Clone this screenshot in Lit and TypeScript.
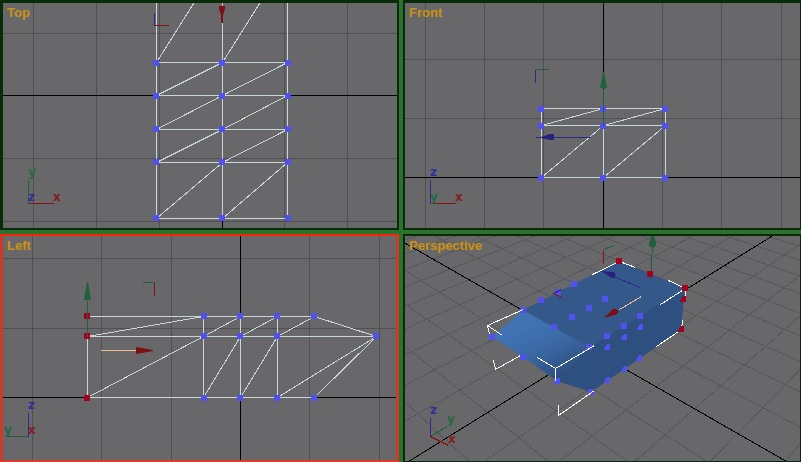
import { LitElement, html, svg, css, nothing, type SVGTemplateResult } from "lit";
import { customElement, property } from "lit/decorators.js";

type Point = [number, number];
type View = "Top" | "Front" | "Left" | "Perspective";

interface Letter {
  text: "x" | "y" | "z";
  at: Point;
}

interface Flat {
  box: string;
  columns: number[];
  rows: number[];
  axisX: number;
  axisY: number;
  mesh: string;
  vertices: Point[];
  selected: Point[];
}

// Shared extent of every line that crosses a whole view.
const FAR = 900;

const product = (xs: number[], ys: number[]): Point[] =>
  ys.flatMap((y) => xs.map((x): Point => [x, y]));

const FLATS: Record<Exclude<View, "Perspective">, Flat> = {
  Top: {
    box: "3 3 394 225",
    columns: [33, 96, 159, 284, 347],
    rows: [33, 158, 221],
    axisX: 222,
    axisY: 95,
    mesh:
      "M156 0V218M222 22V218M287 0V218M156 62H287M156 95H287M156 129H287M156 162H287M156 218H287" +
      "M156 62L195 0M222 62L261 0M156 95L222 62M222 95L287 62M156 129L222 95M222 129L287 95" +
      "M156 162L222 129M222 162L287 129M156 218L222 162M222 218L287 162",
    vertices: product([156, 222, 288], [63, 96, 129, 162, 218]),
    selected: [],
  },
  Front: {
    box: "405 3 395 225",
    columns: [425, 484, 543, 662, 721, 781],
    rows: [59, 118],
    axisX: 603,
    axisY: 177,
    mesh:
      "M541 108H665V177H541ZM541 125H665M603 125V177" +
      "M541 125L603 108M603 125L665 108M541 177L603 125M603 177L665 125",
    vertices: product([541, 603, 665], [109, 126, 178]),
    selected: [],
  },
  Left: {
    box: "3 236 393 224",
    columns: [32, 101, 171, 309, 379],
    rows: [258, 328],
    axisX: 240,
    axisY: 397,
    mesh:
      "M87 316H314L376 336H87V397H314L376 336L277 397M203 316V397M240 316V397M277 316V397" +
      "M87 336L203 316M203 336L240 316M240 336L277 316M277 336L314 316" +
      "M87 397L203 336M203 397L240 336M240 397L277 336",
    vertices: [
      ...product([204, 240, 277, 314], [316, 398]),
      ...product([204, 240, 277, 376], [336]),
    ],
    selected: [[87, 316], [87, 336], [87, 398]],
  },
};

const LETTERS: Record<View, Letter[]> = {
  Top: [{ text: "y", at: [28, 176] }, { text: "z", at: [28, 201] }, { text: "x", at: [53, 201] }],
  Front: [{ text: "z", at: [430, 176] }, { text: "y", at: [430, 201] }, { text: "x", at: [455, 201] }],
  Left: [{ text: "z", at: [28, 409] }, { text: "y", at: [4, 434] }, { text: "x", at: [28, 434] }],
  Perspective: [{ text: "z", at: [430, 414] }, { text: "y", at: [447, 423] }, { text: "x", at: [448, 443] }],
};

// Ground plane projection: origin, the two vanishing points, and the depth change per grid cell.
const ORIGIN: Point = [590, 349];
const VANISH_A: Point = [-41, -12];
const VANISH_B: Point = [1172, -12];
const DEPTH_A = -0.0474;
const DEPTH_B = 0.0499;

function project(a: number, b: number): string {
  const w = 1 + a + b;
  const at = (k: 0 | 1) => ((ORIGIN[k] + a * VANISH_A[k] + b * VANISH_B[k]) / w).toFixed(1);
  return `${at(0)} ${at(1)}`;
}

function groundLine(n: number, alongB: boolean): string {
  const fixed = n * (alongB ? DEPTH_A : DEPTH_B);
  const ends = [0.7, 1.6].map((w) => {
    const free = w - 1 - fixed;
    return alongB ? project(fixed, free) : project(free, fixed);
  });
  return `M${ends[0]}L${ends[1]}`;
}

const STEPS = Array.from({ length: 49 }, (_, i) => i - 24).filter((n) => n !== 0);
const GROUND = STEPS.map((n) => groundLine(n, true) + groundLine(n, false)).join("");
const GROUND_AXES = groundLine(0, true) + groundLine(0, false);

const SOLID_VERTICES: Point[] = [
  [523, 310], [541, 300], [558, 292], [574, 284], [492, 337], [523, 357], [557, 381],
  [591, 392], [589, 347], [554, 327], [572, 317], [589, 308], [605, 299], [607, 336],
  [624, 326], [640, 316],
];
const HALF_VERTICES: Point[] = [[607, 347], [624, 337], [640, 327], [607, 380], [624, 369], [639, 358]];

const square = ([x, y]: Point) => `M${x - 3} ${y - 3}h6v6h-6z`;
const wedge = ([x, y]: Point) => `M${x - 3} ${y + 3}v-1l3 -5h3v6z`;

@customElement("view-port")
export class ViewPort extends LitElement {
  @property() view: View = "Top";

  static styles = css`
    :host {
      display: block;
      position: relative;
      overflow: hidden;
      min-width: 0;
      background: #68686a;
    }
    .name {
      position: absolute;
      top: 2px;
      left: 4px;
      margin: 0;
      color: #cb9210;
      font: bold 13px/16px "Liberation Sans", Arial, sans-serif;
    }
    .scene {
      display: block;
      width: 100%;
      height: 100%;
    }
    .lines path {
      fill: none;
      shape-rendering: crispEdges;
    }
    .lines .grid { stroke: #505052; }
    .lines .ground { stroke: #58585a; }
    .lines .axis { stroke: #000; }
    .lines .mesh { stroke: #cbd6db; }
    .lines .bracket { stroke: #fff; }
    .lines .red { stroke: #8c1014; }
    .lines .green { stroke: #235f3a; }
    .lines .blue { stroke: #30288c; }
    .lines .amber { stroke: #edbd91; }
    .vertex { fill: #5151ef; shape-rendering: crispEdges; }
    .picked { fill: #a50020; shape-rendering: crispEdges; }
    .head-red { fill: #7b1014; }
    .head-green { fill: #20603a; }
    .head-blue { fill: #292180; }
    .letter {
      font: bold 12px "DejaVu Sans", sans-serif;
    }
    .letter-x { fill: #861c20; }
    .letter-y { fill: #236b3d; }
    .letter-z { fill: #342d96; }
    .face-top { fill: #345889; }
    .face-side { fill: #2e5080; }
  `;

  private gizmo(): { lines: SVGTemplateResult; heads: SVGTemplateResult } {
    switch (this.view) {
      case "Top":
        return {
          lines: svg`
            <path class="amber" d="M222 0V6" />
            <path class="blue" d="M154 12V25" />
            <path class="red" d="M154 25H168M28 203H53" />
            <path class="green" d="M28 179V203" />`,
          heads: svg`<path class="head-red" d="M219 6h6v3l-2 6v7h-2v-7l-2 -6z" />`,
        };
      case "Front":
        return {
          lines: svg`
            <path class="green" d="M603 88V125M535 69H548" />
            <path class="blue" d="M535 137H590M535 69V82M430 179V203" />
            <path class="red" d="M430 203H455" />`,
          heads: svg`
            <path class="head-green" d="M603 72h1l3 16h-7z" />
            <path class="head-blue" d="M541 137l9 -3h4v6h-4l-9 -2z" />`,
        };
      case "Left":
        return {
          lines: svg`
            <path class="green" d="M87 300V336M142 282H154M6 436H28" />
            <path class="red" d="M154 282V295" />
            <path class="blue" d="M28 412V436" />
            <path class="amber" d="M100 350H136" />`,
          heads: svg`
            <path class="head-green" d="M87 282h1l3 18h-7z" />
            <path class="head-red" d="M136 347l17 3v1l-17 3z" />`,
        };
      default:
        return {
          lines: svg`
            <path class="green" d="M652 245L650 279M603 249L614 245M430 436L447 426" />
            <path class="blue" d="M640 287L613 276M430 417V436M553 293L561 289" />
            <path class="amber" d="M641 296L619 309" />
            <path class="red" d="M603 250V263M553 293L562 297M430 436L448 445" />`,
          heads: svg`
            <path class="head-green" d="M651 236h3l2 8a3 3 0 0 1 -7 0z" />
            <path class="head-blue" d="M601 271l12 1a3 3 0 0 1 -1 6z" />
            <path class="head-red" d="M604 318l9 -9a4 3 0 0 1 5 4l-3 2z" />`,
        };
    }
  }

  private letters() {
    return LETTERS[this.view].map(
      ({ text, at }) => svg`<text class="letter letter-${text}" x=${at[0]} y=${at[1]}>${text}</text>`,
    );
  }

  private flat(f: Flat) {
    const { lines, heads } = this.gizmo();
    const grid = f.columns.map((x) => `M${x} 0V${FAR}`).join("") + f.rows.map((y) => `M0 ${y}H${FAR}`).join("");
    return html`
      <svg class="scene" viewBox=${f.box} preserveAspectRatio="xMidYMid slice" aria-hidden="true">
        <g class="lines" transform="translate(.5 .5)">
          <path class="grid" d=${grid} />
          <path class="axis" d="M${f.axisX} 0V${FAR}M0 ${f.axisY}H${FAR}" />
          <path class="mesh" d=${f.mesh} />
        </g>
        <path class="vertex" d=${f.vertices.map(square).join("")} />
        ${f.selected.length ? svg`<path class="picked" d=${f.selected.map(square).join("")} />` : nothing}
        <g class="lines" transform="translate(.5 .5)">${lines}</g>
        ${heads}${this.letters()}
      </svg>
    `;
  }

  private perspective() {
    const { lines, heads } = this.gizmo();
    return html`
      <svg class="scene" viewBox="405 236 395 225" preserveAspectRatio="xMidYMid slice" aria-hidden="true">
        <defs>
          <linearGradient id="nose" gradientUnits="userSpaceOnUse" x1="530" y1="325" x2="554" y2="378">
            <stop offset="0" stop-color="#4072b4" />
            <stop offset=".45" stop-color="#3b69a6" />
            <stop offset="1" stop-color="#2e507f" />
          </linearGradient>
        </defs>
        <g class="lines">
          <path class="ground" d=${GROUND} />
          <path class="axis" d=${GROUND_AXES} />
        </g>
        <path class="face-side" d="M589 347L685 288L681 330L591 392L557 381L552 368Z" />
        <path class="face-top" d="M523 310L619 261L650 274L685 288L589 348Z" />
        <path fill="url(#nose)" d="M523 310L589 347L565 375L557 381L523 357L492 337Z" />
        <path class="vertex" d=${SOLID_VERTICES.map(square).join("") + HALF_VERTICES.map(wedge).join("")} />
        <g class="lines" transform="translate(.5 .5)">
          <path
            class="bracket"
            d="M523 309L487 325L489 334M487 325L502 335M493 360L495 369L520 355M537 357L555 368V380M555 368L594 345M558 404V415L594 390M592 274L619 261L635 267M668 280L685 288V297M685 288L660 304M682 320L681 329L656 346"
          />
          ${lines}
        </g>
        <path class="picked" d=${square([619, 261]) + square([650, 274]) + square([685, 288]) + wedge([683, 299]) + wedge([681, 329])} />
        ${heads}${this.letters()}
      </svg>
    `;
  }

  render() {
    return html`
      ${this.view === "Perspective" ? this.perspective() : this.flat(FLATS[this.view])}
      <h2 class="name">${this.view}</h2>
    `;
  }
}

@customElement("app-root")
export class AppRoot extends LitElement {
  static styles = css`
    :host {
      display: block;
    }
    .board {
      display: grid;
      box-sizing: border-box;
      min-height: 100vh;
      grid-template-columns: 399fr 398fr;
      grid-template-rows: 230fr 228fr;
      gap: 4px;
      background: #2b722e;
    }
    .pane {
      border: 2px solid #082c08;
    }
    .top {
      border-width: 3px 2px 2px 3px;
    }
    .front {
      border-width: 3px 1px 2px 2px;
    }
    .left {
      border-width: 2px 3px 2px 3px;
      border-color: #fb2408 #cc3a2c #d83c2c #cc3a2c;
    }
    .perspective {
      border-width: 2px 1px 1px 2px;
    }
  `;

  render() {
    return html`
      <main class="board">
        <view-port class="pane top" view="Top"></view-port>
        <view-port class="pane front" view="Front"></view-port>
        <view-port class="pane left" view="Left"></view-port>
        <view-port class="pane perspective" view="Perspective"></view-port>
      </main>
    `;
  }
}
